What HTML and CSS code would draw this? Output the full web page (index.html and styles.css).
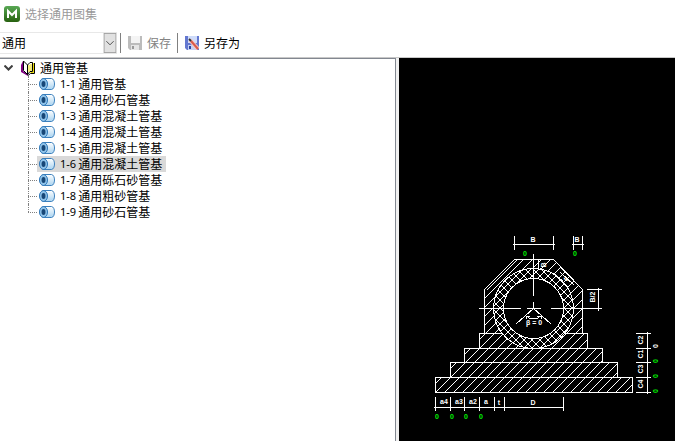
FILE: index.html
```html
<!DOCTYPE html>
<html lang="zh-CN">
<head>
<meta charset="utf-8">
<title>选择通用图集</title>
<link rel="stylesheet" href="styles.css">
</head>
<body>
<svg class="defs" aria-hidden="true">
  <defs>
    <linearGradient id="green" x1="0" y1="0" x2="0" y2="1"><stop offset="0" stop-color="#58a854"/><stop offset="1" stop-color="#27610f"/></linearGradient>
    <linearGradient id="pipeFill" x1="0" y1="0" x2="0" y2="1"><stop offset="0" stop-color="#ffffff"/><stop offset="1" stop-color="#a9d3f0"/></linearGradient>
    <symbol id="pipe" viewBox="0 0 16 12">
      <path d="M4 .5H12.500C16.500 1 16.500 11 12.500 11.500H4Z" fill="url(#pipeFill)" stroke="#3c80bd"/>
      <ellipse cx="4.500" cy="6" rx="4" ry="5.500" fill="#8fc3e9" stroke="#2f77b8"/>
      <ellipse cx="4.500" cy="6" rx="2" ry="3" fill="#174777"/>
    </symbol>
  </defs>
</svg>
<header class="titlebar">
  <svg class="logo" viewBox="0 0 16 16" aria-hidden="true"><rect width="16" height="16" rx="3" fill="url(#green)"/><path d="M4 12V5L8 9L12 5V12" fill="none" stroke="#fff" stroke-width="2"/></svg>
  <h1>选择通用图集</h1>
</header>
<div class="toolbar">
  <div class="combo">
    <select aria-label="图集类别"><option>通用</option></select>
    <svg class="arrow" viewBox="0 0 14 22" aria-hidden="true"><rect x=".5" y=".5" width="13" height="21" fill="#e1e1e1" stroke="#a0a0a0"/><path d="M3 9L7 13L11 9" fill="none" stroke="#444"/></svg>
  </div>
  <button class="tool" disabled>
    <svg viewBox="0 0 14 14" aria-hidden="true"><path d="M0 0H14V14H2L0 12Z" fill="#bcbcbc"/><path d="M3 0H12V7H3Z" fill="#f4f4f4"/><path d="M3 9H11V14H3Z" fill="#e6e6e6"/><path d="M4 10H6V13H4Z" fill="#999"/></svg>
    保存
  </button>
  <button class="tool">
    <svg viewBox="0 0 14 14" aria-hidden="true"><path d="M0 0H14V14H2L0 12Z" fill="#6478d0"/><path d="M3 0H12V7H3Z" fill="#cfdcfa"/><path d="M3 9H11V14H3Z" fill="#c5d0f2"/><path d="M4 10H6V13H4Z" fill="#2c449f"/><path d="M5 4L13 13" stroke="#f3c9c4" stroke-width="4"/><path d="M6 5L13 13" stroke="#d9594a" stroke-width="2"/><path d="M4 3L6 5" stroke="#333" stroke-width="2"/></svg>
    另存为
  </button>
</div>
<main class="panes">
  <nav class="tree" aria-label="图集">
    <div class="root">
      <button class="toggle" aria-label="折叠"><svg viewBox="0 0 9 6" aria-hidden="true"><path d="M.5 .5L4.500 4.500L8.500 .5" fill="none" stroke="#404040" stroke-width="2"/></svg></button>
      <svg class="book" viewBox="0 0 16 16" aria-hidden="true">
        <path d="M1 5L3 1V11L8 14V16L1 12Z" fill="#800080"/>
        <path d="M3.500 1L7.500 5V14.500L3.500 10.500Z" fill="#fff" stroke="#000"/>
        <path d="M7.500 5L10 2.500H12.500V11.500H10L7.500 14.500Z" fill="#fff" stroke="#000"/>
        <path d="M9 5V12M11 4V11" stroke="#e8d800"/>
        <path d="M14.500 3V13.500H10.500L8 15.500" fill="none" stroke="#000" stroke-width="1"/><path d="M13.500 3V12.500H10.500" fill="none" stroke="#e8d800"/>
      </svg>
      <span>通用管基</span>
    </div>
    <ul>
      <li><button><svg><use href="#pipe"/></svg><span class="num">1-1</span>通用管基</button></li>
      <li><button><svg><use href="#pipe"/></svg><span class="num">1-2</span>通用砂石管基</button></li>
      <li><button><svg><use href="#pipe"/></svg><span class="num">1-3</span>通用混凝土管基</button></li>
      <li><button><svg><use href="#pipe"/></svg><span class="num">1-4</span>通用混凝土管基</button></li>
      <li><button><svg><use href="#pipe"/></svg><span class="num">1-5</span>通用混凝土管基</button></li>
      <li><button class="selected" aria-current="true"><svg><use href="#pipe"/></svg><span class="num">1-6</span>通用混凝土管基</button></li>
      <li><button><svg><use href="#pipe"/></svg><span class="num">1-7</span>通用砾石砂管基</button></li>
      <li><button><svg><use href="#pipe"/></svg><span class="num">1-8</span>通用粗砂管基</button></li>
      <li><button><svg><use href="#pipe"/></svg><span class="num">1-9</span>通用砂石管基</button></li>
    </ul>
  </nav>
  <section class="preview" aria-label="预览">
    <svg viewBox="399 58 276 383">
      <defs>
        <pattern id="hatch" width="9" height="9" patternUnits="userSpaceOnUse"><path d="M-1 10L10 -1M-1 1L1 -1M8 10L10 8" stroke="#fff"/></pattern>
        <pattern id="cross" width="8" height="8" patternUnits="userSpaceOnUse"><path d="M-1 9L9 -1M-1 -1L9 9" stroke="#fff"/></pattern>
      </defs>
      <g class="lines">
        <path fill="url(#hatch)" d="M484.500 333.500V289.500L514.500 259.500H553.500L582.500 289.500V333.500H587.500V348.500H479.500V333.500Z"/>
        <path d="M484.500 333.500H502M565 333.500H582.500M487 290L517 260"/>
        <path fill="url(#hatch)" d="M464.500 348.500H602.500V362.500H464.500Z"/>
        <path fill="url(#hatch)" d="M450.500 362.500H617.500V377.500H450.500Z"/>
        <path fill="url(#hatch)" d="M435.500 377.500H632.500V392.500H435.500Z"/>
        <circle class="solid" cx="533.500" cy="308.500" r="40"/>
        <circle fill="url(#cross)" cx="533.500" cy="308.500" r="40"/>
        <circle class="solid" cx="533.500" cy="308.500" r="30"/>
        <path d="M533.500 254V296M533.500 302V309M479 308.500H521M527 308.500H541M551 308.500H602"/>
        <path d="M516 324L533.500 308.500L551 324M526 316Q533.500 322 541 316M526 316V319M526 316H530M541 316V319M541 316H537"/>
        <path d="M513 244.500H555M514.500 236V250M553.500 236V250M572 244.500H584M573.500 236V250M582.500 236V250"/>
        <path d="M538.500 259V270M537 268L539 270L541 268M587 289.500H602M598.500 288V311M560 272L574 285"/>
        <path d="M434 407.500H564M435.500 397V411M450.500 397V411M464.500 397V411M479.500 397V411M494.500 397V411M504.500 397V411M563.500 397V411"/>
        <path d="M647.500 332V394M636 333.500H651M636 348.500H651M636 362.500H651M636 377.500H651M636 392.500H651"/>
      </g>
      <g class="label">
        <text x="533" y="242">B</text><text x="577" y="242">B</text>
        <text x="444" y="404">a4</text><text x="459" y="404">a3</text><text x="473" y="404">a2</text><text x="486" y="404">a</text><text x="499" y="405">t</text><text x="533" y="405">D</text>
        <text x="534" y="325">β = 0</text>
        <text transform="translate(546 265) rotate(-90)">B</text>
        <text transform="translate(567 281) rotate(-45)">t</text>
        <text transform="translate(595 297) rotate(-90)">B/2</text>
        <text transform="translate(643 340) rotate(-90)">C2</text>
        <text transform="translate(643 354) rotate(-90)">C1</text>
        <text transform="translate(643 369) rotate(-90)">C3</text>
        <text transform="translate(643 384) rotate(-90)">C4</text>
        <text transform="translate(658 346) rotate(-90)">0</text>
      </g>
      <g class="label value">
        <text x="525" y="256">0</text><text x="575" y="256">0</text>
        <text x="437" y="419">0</text><text x="452" y="419">0</text><text x="466" y="419">0</text><text x="481" y="419">0</text>
        <text transform="translate(658 361) rotate(-90)">0</text>
        <text transform="translate(658 376) rotate(-90)">0</text>
        <text transform="translate(658 391) rotate(-90)">0</text>
      </g>
    </svg>
  </section>
</main>
</body>
</html>
```
FILE: styles.css
```css
* { box-sizing: border-box; }
body {
  margin: 0;
  height: 100vh;
  display: flex;
  flex-direction: column;
  background: #fff;
  color: #000;
  font: 12px/16px "Noto Sans CJK SC", sans-serif;
  overflow: hidden;
}
button, select { font: inherit; color: inherit; background: none; border: 0; padding: 0; margin: 0; }
.defs { position: absolute; width: 0; height: 0; }
.titlebar { display: flex; align-items: center; gap: 5px; height: 28px; padding-left: 4px; }
.logo { width: 16px; height: 16px; }
h1 { margin: 0; font-size: 12px; font-weight: 400; color: #999; }
.toolbar { display: flex; align-items: center; height: 30px; border-bottom: 1px solid #c8c8c8; }
.combo { display: grid; width: 117px; height: 22px; border: solid #e8e8e8; border-width: 1px 0; margin-right: 3px; }
.combo select { grid-area: 1 / 1; appearance: none; padding-left: 2px; border-radius: 0; }
.combo .arrow { grid-area: 1 / 1; justify-self: end; width: 14px; height: 20px; pointer-events: none; }
.tool { display: flex; align-items: center; gap: 5px; height: 20px; padding: 0 6px 0 7px; border-left: 1px solid #808080; }
.tool svg { width: 14px; height: 14px; }
.tool:disabled { color: #838383; }
.panes { flex: 1; min-height: 0; display: grid; grid-template-columns: 396fr 276fr; column-gap: 3px; background: #f0f0f0; }
.tree { background: #fff; border: solid #828790; border-width: 1px 1px 0 0; padding-top: 1px; overflow: hidden; }
.root { display: flex; align-items: center; height: 16px; padding-left: 4px; }
.toggle { display: flex; width: 9px; margin-right: 7px; }
.toggle svg { width: 9px; height: 6px; }
.book { width: 16px; height: 16px; margin-right: 4px; }
.tree ul { list-style: none; margin: 0 0 0 28px; padding: 0; }
.tree li { display: flex; align-items: center; height: 16px; position: relative; }
.tree li::before { content: ""; width: 9px; border-top: 1px dotted #808080; }
.tree li::after { content: ""; position: absolute; left: 0; top: 0; bottom: 0; border-left: 1px dotted #808080; }
.tree li:last-child::after { bottom: 8px; }
.tree li button { display: flex; align-items: center; height: 16px; padding: 0 4px 0 2px; }
.tree li svg { width: 16px; height: 12px; margin-right: 5px; }
.num { font: 11px/16px "Noto Sans", sans-serif; margin-right: 2px; }
.tree li .selected { background: #d9d9d9; }
.preview { background: #000; min-height: 0; min-width: 0; }
.preview svg { display: block; width: 100%; height: 100%; }
.lines { fill: none; stroke: #fff; stroke-width: 1; shape-rendering: crispEdges; }
.solid { fill: #000; }
.label { font: bold 7px "Liberation Sans", sans-serif; fill: #fff; text-anchor: middle; }
.value { fill: #00f000; }
```
